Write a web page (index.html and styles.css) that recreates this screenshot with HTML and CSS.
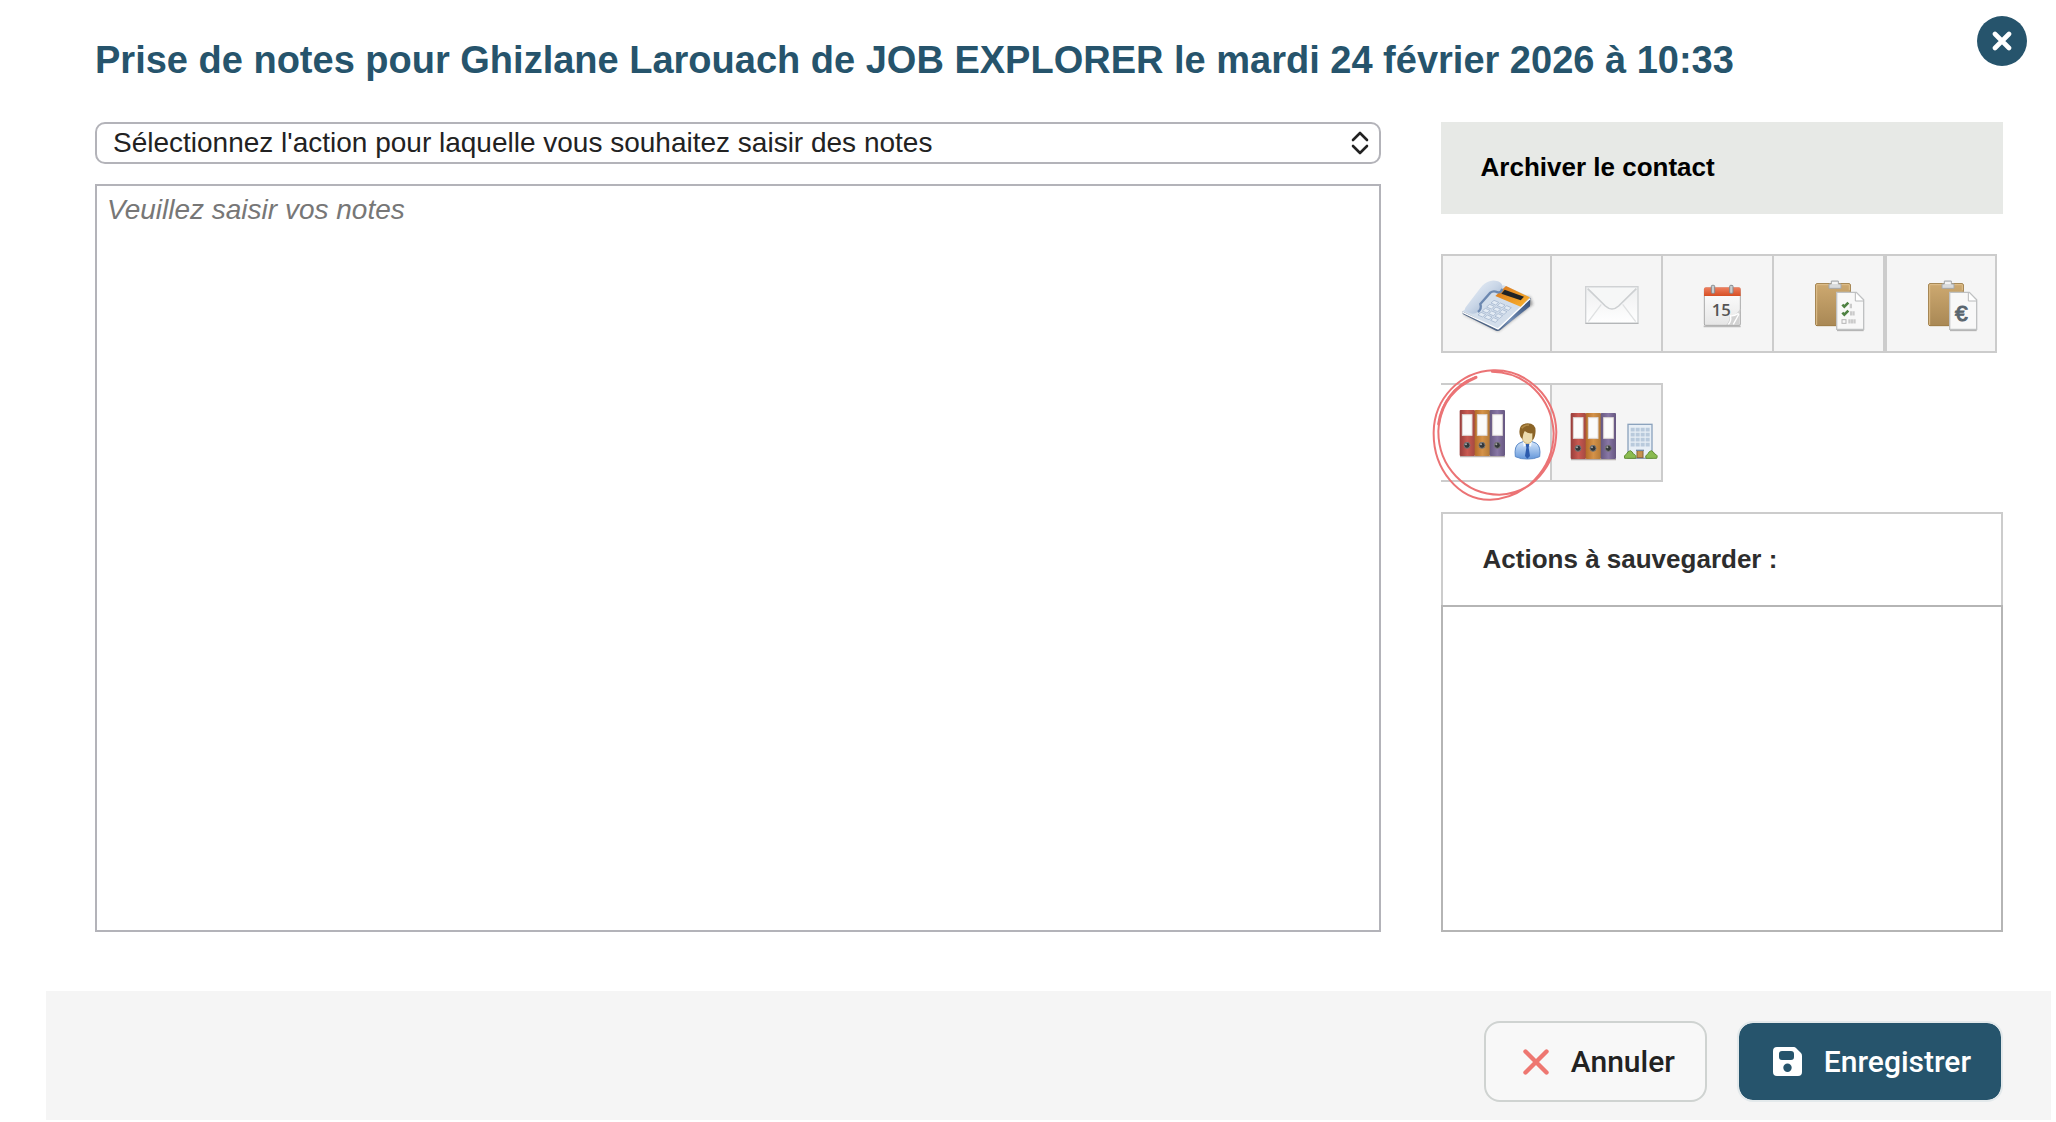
FILE: index.html
```html
<!DOCTYPE html>
<html lang="fr">
<head>
    <meta charset="UTF-8">
    <meta name="viewport" content="width=device-width, initial-scale=1.0">
    <title>Prise de notes</title>
    <link rel="stylesheet" href="styles.css">
</head>
<body>
    <form class="notes-modal">
        <button type="button" class="close-btn" aria-label="Fermer">
            <svg width="20" height="20" viewBox="0 0 20 20"><path d="M3 3L17 17M17 3L3 17" stroke="#fff" stroke-width="4.6" stroke-linecap="round"/></svg>
        </button>
        <h1>Prise de notes pour Ghizlane Larouach de JOB EXPLORER le mardi 24 février 2026 à 10:33</h1>

        <div class="content">
            <div class="notes-column">
                <div class="select-wrapper">
                    <select id="action" aria-label="Action">
                        <option>Sélectionnez l'action pour laquelle vous souhaitez saisir des notes</option>
                    </select>
                    <svg class="select-arrows" width="18" height="24" viewBox="0 0 18 24"><path d="M2 9L9 2L16 9M2 15L9 22L16 15" fill="none" stroke="#222" stroke-width="2.6" stroke-linecap="round" stroke-linejoin="round"/></svg>
                </div>
                <textarea id="notes" aria-label="Notes" placeholder="Veuillez saisir vos notes"></textarea>
            </div>

            <div class="side-column">
                <div class="side-title">Archiver le contact</div>

                <div class="tools">
                    <button type="button" class="tool tool-first" aria-label="Appel">
                        <svg width="107" height="95" viewBox="39 47 321 285">
                            <defs>
                                <linearGradient id="handset" x1="0" y1="0" x2="1" y2="1"><stop offset="0" stop-color="#f4f8fc"/><stop offset=".5" stop-color="#c9d6e7"/><stop offset="1" stop-color="#8ba3c4"/></linearGradient>
                                <linearGradient id="phoneSide" x1="1" y1="0" x2="0" y2="1"><stop offset="0" stop-color="#2a4570"/><stop offset=".5" stop-color="#7590b7"/><stop offset="1" stop-color="#23344e"/></linearGradient>
                                <linearGradient id="screen" x1="0" y1="0" x2="1" y2="1"><stop offset="0" stop-color="#d9751c"/><stop offset="1" stop-color="#fab42e"/></linearGradient>
                                <filter id="soft" x="-20%" y="-20%" width="140%" height="140%"><feGaussianBlur stdDeviation="4"/></filter>
                            </defs>
                            <path d="M100 222L205 273L309 192L299 168Z" fill="#222" opacity=".45" filter="url(#soft)"/>
                            <path d="M98 213L204 265L301 172L300 198L210 270Q205 274 198 271L98 221Z" fill="url(#phoneSide)"/>
                            <path d="M98 213L190 140L222 135L302 170L210 263Q204 268 197 264Z" fill="#d3deeb"/>
                            <path d="M98 216L204 266L300 175" fill="none" stroke="#fff" stroke-width="4"/>
                            <path d="M228 137L300 171L272 199L196 167Z" fill="url(#screen)"/>
                            <path d="M224 148L282 169L272 180L214 160Z" fill="#202326"/>
                            <path d="M104 212Q103 203 112 194L151 143Q163 127 181 122Q190 119 204 123Q220 129 217 145Q214 155 203 156Q190 150 181 157L151 191Q156 205 144 215Q132 223 118 218Z" fill="url(#handset)"/>
                            <path d="M217 145Q214 157 203 156Q190 150 181 157L151 191Q156 205 144 215" fill="none" stroke="#6c88b0" stroke-width="7"/>
                            <g fill="#e3ebf4" stroke="#9aaec8" stroke-width="2">
                                <path d="M192 180l14 6-9 8-14-6zM211 188l14 6-9 8-14-6zM230 196l14 6-9 8-14-6z"/>
                                <path d="M179 192l14 6-9 8-14-6zM198 200l14 6-9 8-14-6zM217 208l14 6-9 8-14-6z"/>
                                <path d="M166 204l14 6-9 8-14-6zM185 212l14 6-9 8-14-6zM204 220l14 6-9 8-14-6z"/>
                                <path d="M153 216l14 6-9 8-14-6zM172 224l14 6-9 8-14-6zM191 232l14 6-9 8-14-6z"/>
                            </g>
                        </svg>
                    </button>
                    <button type="button" class="tool" aria-label="E-mail">
                        <svg width="109" height="95" viewBox="366 47 327 285">
                            <defs>
                                <linearGradient id="paper" x1="0" y1="0" x2="0" y2="1"><stop offset="0" stop-color="#eeeff0"/><stop offset="1" stop-color="#fff"/></linearGradient>
                            </defs>
                            <rect x="467" y="139" width="157" height="110" fill="url(#paper)" stroke="#d0d2d4" stroke-width="4"/>
                            <path d="M467 249H625" stroke="#b4b6b8" stroke-width="4"/>
                            <path d="M475 244L514 192M617 244L578 192" stroke="#dfe1e2" stroke-width="4" fill="none"/>
                            <path d="M471 143L526 196Q546 215 566 196L621 143Z" fill="#f6f7f7"/>
                            <path d="M473 145L526 197Q546 215 566 197L619 145" fill="none" stroke="#cdd0d2" stroke-width="5"/>
                        </svg>
                    </button>
                    <button type="button" class="tool" aria-label="Rendez-vous">
                        <svg width="109" height="95" viewBox="-111 47 327 285">
                            <defs>
                                <linearGradient id="calTop" x1="0" y1="0" x2="0" y2="1"><stop offset="0" stop-color="#ee8060"/><stop offset="1" stop-color="#d64f24"/></linearGradient>
                                <linearGradient id="sheet" x1="0" y1="0" x2="0" y2="1"><stop offset="0" stop-color="#fff"/><stop offset="1" stop-color="#e6e6e6"/></linearGradient>
                            </defs>
                            <path d="M11 258H122" stroke="#bbb" stroke-width="5"/>
                            <rect x="13" y="143" width="108" height="112" rx="4" fill="url(#sheet)" stroke="#aaa" stroke-width="3"/>
                            <path d="M12 167V146Q12 141 18 141H116Q122 141 122 146V167Z" fill="url(#calTop)"/>
                            <g fill="#c9cccf" stroke="#858a8e" stroke-width="3"><rect x="34" y="135" width="10" height="24" rx="3"/><rect x="89" y="135" width="10" height="24" rx="3"/></g>
                            <text x="35" y="226" class="cal-day">15</text>
                            <path d="M121 205L117 254H78Q92 241 88 224Q103 232 121 205Z" fill="#d2d2d2"/>
                            <path d="M116 219Q99 229 91 226Q96 240 85 252M117 221L100 252" fill="none" stroke="#fff" stroke-width="4"/>
                        </svg>
                    </button>
                    <button type="button" class="tool" aria-label="Liste de tâches">
                        <svg width="109" height="95" viewBox="222 47 327 285">
                            <defs>
                                <linearGradient id="board" x1="0" y1="0" x2="0" y2="1"><stop offset="0" stop-color="#cda970"/><stop offset="1" stop-color="#a98855"/></linearGradient>
                                <g id="clipboard">
                                    <rect x="347" y="130" width="104" height="126" rx="4" fill="url(#board)" stroke="#9b7840" stroke-width="3"/>
                                    <path d="M350 254V133H448V150" fill="none" stroke="#dfc18e" stroke-width="3"/>
                                    <path d="M387 144V131H394V122H415V131H423V144Z" fill="#d9dbdc" stroke="#a5a8aa" stroke-width="3"/>
                                    <path d="M396 128H413" stroke="#f9f9f9" stroke-width="5"/>
                                    <path d="M411 270H491" stroke="#b5b5b5" stroke-width="5"/>
                                    <path d="M410 156H469L491 178V267H410Z" fill="#f8f8f8" stroke="#bfc1c2" stroke-width="4"/>
                                    <path d="M466 157V182H490" fill="#fff" stroke="#b7b9ba" stroke-width="3"/>
                                </g>
                            </defs>
                            <use href="#clipboard"/>
                            <path d="M427 193L433 199L445 187M427 217L433 223L445 211" fill="none" stroke="#4e8142" stroke-width="8"/>
                            <path d="M449 197H456M450 219H464M445 243H467" stroke="#cbcbcb" stroke-width="13" stroke-dasharray="7 1"/>
                            <rect x="426" y="238" width="12" height="11" fill="none" stroke="#b5b5b5" stroke-width="3"/>
                        </svg>
                    </button>
                    <button type="button" class="tool tool-last" aria-label="Devis">
                        <svg width="108" height="95" viewBox="561 47 324 285">
                            <use href="#clipboard" x="339"/>
                            <text x="765" y="241" class="euro">€</text>
                        </svg>
                    </button>
                </div>

                <div class="tools">
                    <button type="button" class="tool tool-active" aria-label="Archiver le contact">
                        <svg width="109" height="95" viewBox="63 90 327 285">
                            <defs>
                                <linearGradient id="red"><stop offset="0" stop-color="#963d3b"/><stop offset=".5" stop-color="#c95a51"/><stop offset="1" stop-color="#a44842"/></linearGradient>
                                <linearGradient id="orange"><stop offset="0" stop-color="#b36b28"/><stop offset=".5" stop-color="#d5934a"/><stop offset="1" stop-color="#b37936"/></linearGradient>
                                <linearGradient id="purple"><stop offset="0" stop-color="#665880"/><stop offset=".5" stop-color="#8877a5"/><stop offset="1" stop-color="#665780"/></linearGradient>
                                <linearGradient id="shirt" x1="0" y1="0" x2="0" y2="1"><stop offset="0" stop-color="#d7e8fb"/><stop offset="1" stop-color="#6598db"/></linearGradient>
                                <g id="binders">
                                    <path d="M120 305H255" stroke="#8b7f7c" stroke-width="4" opacity=".6"/>
                                    <rect x="119" y="165" width="46" height="138" rx="3" fill="url(#red)"/>
                                    <rect x="164" y="165" width="46" height="138" rx="3" fill="url(#orange)"/>
                                    <rect x="209" y="165" width="46" height="138" rx="3" fill="url(#purple)"/>
                                    <g fill="#fbfbfb" stroke="#ded8d6" stroke-width="3"><rect x="127" y="179" width="29" height="62"/><rect x="172" y="179" width="29" height="62"/><rect x="218" y="179" width="29" height="62"/></g>
                                    <g fill="#333639" stroke="#777" stroke-width="3"><circle cx="141" cy="271" r="9"/><circle cx="186" cy="271" r="9"/><circle cx="232" cy="271" r="9"/></g>
                                    <g fill="#aaa"><circle cx="138" cy="268" r="3"/><circle cx="183" cy="268" r="3"/><circle cx="229" cy="268" r="3"/></g>
                                </g>
                            </defs>
                            <use href="#binders"/>
                            <path d="M286 305Q282 273 297 265L311 259H334L349 265Q363 274 359 305Q340 313 322 312Q304 313 286 305Z" fill="url(#shirt)" stroke="#5c8bc9" stroke-width="3"/>
                            <path d="M309 257L322 267L336 257L333 275L322 269L311 275Z" fill="#f4f9ff"/>
                            <path d="M317 267H328L326 278L330 303L322 311L315 303L319 278Z" fill="#2c5bad"/>
                            <path d="M305 230Q304 266 323 266Q341 265 342 230Q331 220 305 230Z" fill="#ecdcae" stroke="#b99c5b" stroke-width="2"/>
                            <path d="M299 238Q294 205 323 205Q351 206 346 236Q344 251 337 255L337 235Q324 237 314 228Q309 236 307 252Q300 247 299 238Z" fill="#8b6427"/>
                            <path d="M305 220Q312 210 327 210" fill="none" stroke="#b18a46" stroke-width="5"/>
                            <g class="hand-circle">
                                <path d="M168 66C100 90 57 150 55 229C55 335 135 419 238 419C335 416 407 335 409 231C407 125 318 43 220 46C119 50 43 131 41 231C39 341 115 436 211 434C312 431 400 345 401 235C396 128 315 51 216 50"/>
                                <path d="M168 67C109 92 66 139 56 207" stroke-width="9"/>
                            </g>
                        </svg>
                    </button>
                    <button type="button" class="tool" aria-label="Archiver l'entreprise">
                        <svg width="109" height="95" viewBox="396 90 327 285">
                            <use href="#binders" x="333" y="9"/>
                            <rect x="624" y="208" width="72" height="102" fill="#e8eff6" stroke="#8ca3bd" stroke-width="4"/>
                            <path d="M632 224H691M632 239H691M632 254H691M632 269H691" stroke="#b9cadc" stroke-width="11" stroke-dasharray="12 3"/>
                            <rect x="651" y="287" width="18" height="21" fill="#c6904c" stroke="#876239" stroke-width="3"/>
                            <path d="M648 286H672" stroke="#7187a0" stroke-width="4"/>
                            <path d="M614 310Q610 301 619 298Q622 289 631 287Q638 290 640 297Q651 300 647 310ZM678 310Q674 301 683 298Q686 289 694 287Q701 290 704 297Q715 300 710 310Z" fill="#8abb4f" stroke="#638f35" stroke-width="3"/>
                        </svg>
                    </button>
                </div>

                <div class="saved">
                    <h2>Actions à sauvegarder :</h2>
                    <div class="saved-list"></div>
                </div>
            </div>
        </div>

        <div class="footer">
            <button type="button" class="btn btn-cancel">
                <svg width="26" height="26" viewBox="0 0 26 26"><path d="M2.5 2.5L23.5 23.5M23.5 2.5L2.5 23.5" stroke="#ee7771" stroke-width="4.4" stroke-linecap="round"/></svg>
                Annuler
            </button>
            <button type="submit" class="btn btn-save">
                <svg width="29" height="29" viewBox="0 0 29 29"><path fill="#fff" fill-rule="evenodd" d="M4 0H21Q22 0 23 1L28 6Q29 7 29 9V25Q29 29 25 29H4Q0 29 0 25V4Q0 0 4 0ZM9 4Q6 4 6 7V10Q6 13 9 13H18Q21 13 21 10V7Q21 4 18 4ZM14.500 16.500A4.200 4.200 0 1 0 14.500 24.900A4.200 4.200 0 1 0 14.500 16.500Z"/></svg>
                Enregistrer
            </button>
        </div>
    </form>
</body>
</html>
```

FILE: styles.css
```css
* {
    box-sizing: border-box;
}

body {
    margin: 0;
    font-family: Arial, "Liberation Sans", sans-serif;
    background-color: #fff;
    color: #222;
}

.notes-modal {
    position: relative;
    display: flex;
    flex-direction: column;
    min-height: 100vh;
    padding: 38px 5px 2px 46px;
}

.close-btn {
    position: absolute;
    top: 16px;
    right: 29px;
    display: flex;
    align-items: center;
    justify-content: center;
    width: 50px;
    height: 50px;
    padding: 0;
    border: none;
    border-radius: 50%;
    background-color: #26546c;
    cursor: pointer;
}

h1 {
    margin: 0 100px 40px 49px;
    font-size: 38px;
    line-height: 44px;
    color: #26546c;
}

.content {
    display: grid;
    grid-template-columns: 16fr 7fr;
    gap: 60px;
    flex: 1;
    padding: 0 48px 59px 49px;
}

.notes-column,
.side-column {
    display: flex;
    flex-direction: column;
}

.notes-column {
    gap: 20px;
}

.select-wrapper {
    position: relative;
    display: flex;
}

select {
    appearance: none;
    width: 100%;
    height: 42px;
    padding: 0 48px 2px 16px;
    border: 2px solid #b3b3b9;
    border-radius: 10px;
    background-color: #fff;
    color: #222;
    font-family: inherit;
    font-size: 28px;
}

.select-arrows {
    position: absolute;
    top: 9px;
    right: 12px;
    pointer-events: none;
}

textarea {
    flex: 1;
    width: 100%;
    padding: 8px 10px;
    border: 2px solid #b3b3b9;
    resize: none;
    font-family: inherit;
    font-size: 28px;
    line-height: 32px;
}

textarea::placeholder {
    color: #777;
    font-style: italic;
}

.side-title {
    padding: 29px 40px 31px;
    margin-bottom: 40px;
    background-color: #e7e9e6;
    color: #000;
    font-size: 26px;
    font-weight: bold;
    line-height: 32px;
}

.tools {
    display: flex;
    margin-bottom: 30px;
}

.tool {
    width: 111px;
    height: 99px;
    padding: 0;
    border: 2px solid #ccc;
    border-left: none;
    background-color: #f5f5f5;
    cursor: pointer;
}

.tool svg {
    display: block;
}

.tool-first,
.tool-last {
    border-left: 2px solid #ccc;
}

.tool-last {
    width: 112px;
}

.tool-active {
    position: relative;
    background-color: #fff;
}

.tool-active svg {
    overflow: visible;
}

.cal-day {
    font: 600 50px "Open Sans", sans-serif;
    fill: #555;
}

.euro {
    font: 68px "Liberation Sans", sans-serif;
    fill: #59656e;
    stroke: #59656e;
    stroke-width: 3;
}

.hand-circle {
    fill: none;
    stroke: #eb7375;
    stroke-width: 6;
    stroke-linecap: round;
}

.saved {
    display: flex;
    flex-direction: column;
    flex: 1;
}

h2 {
    margin: 0;
    padding: 29px 40px 30px;
    border: 2px solid #ccc;
    border-bottom: none;
    color: #2d2d2d;
    font-size: 26px;
    line-height: 32px;
}

.saved-list {
    flex: 1;
    border: 2px solid #b5b5b5;
}

.footer {
    display: flex;
    justify-content: flex-end;
    align-items: center;
    gap: 30px;
    padding: 30px 48px 18px;
    background-color: #f5f5f5;
}

.btn {
    display: flex;
    align-items: center;
    gap: 22px;
    height: 81px;
    border-radius: 16px;
    font-family: Roboto, sans-serif;
    font-size: 30px;
    font-weight: 500;
    cursor: pointer;
}

.btn-cancel {
    padding: 0 30px 0 37px;
    border: 2px solid #cfd3d1;
    background-color: #f8f8f8;
    color: #222;
}

.btn-save {
    padding: 0 30px 0 34px;
    border: 2px solid #e3e9eb;
    background-color: #26546c;
    background-clip: padding-box;
    color: #fff;
}
```
